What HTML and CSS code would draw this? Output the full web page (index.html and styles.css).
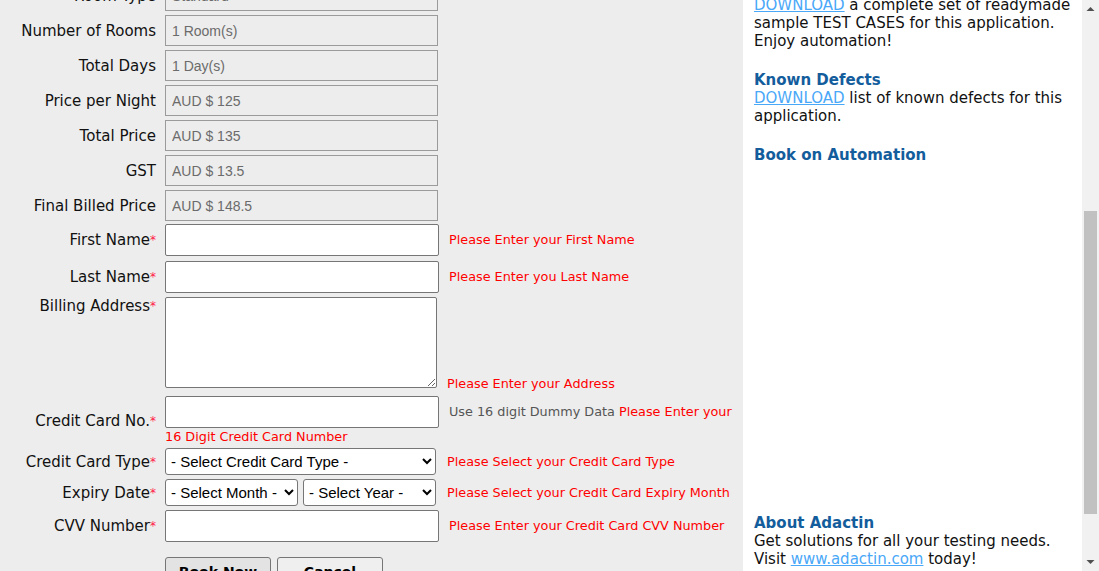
FILE: index.html
```html
<!DOCTYPE html>
<html lang="en">
<head>
<meta charset="utf-8">
<title>Book A Hotel</title>
<link rel="stylesheet" href="styles.css">
</head>
<body>
<div class="page">
  <main class="main">
    <form class="form">
      <div class="row">
        <div class="label">Room Type</div>
        <div class="field"><input class="ro" type="text" value="Standard" readonly></div>
      </div>
      <div class="row">
        <div class="label">Number of Rooms</div>
        <div class="field"><input class="ro" type="text" value="1 Room(s)" readonly></div>
      </div>
      <div class="row">
        <div class="label">Total Days</div>
        <div class="field"><input class="ro" type="text" value="1 Day(s)" readonly></div>
      </div>
      <div class="row">
        <div class="label">Price per Night</div>
        <div class="field"><input class="ro" type="text" value="AUD $ 125" readonly></div>
      </div>
      <div class="row">
        <div class="label">Total Price</div>
        <div class="field"><input class="ro" type="text" value="AUD $ 135" readonly></div>
      </div>
      <div class="row">
        <div class="label">GST</div>
        <div class="field"><input class="ro" type="text" value="AUD $ 13.5" readonly></div>
      </div>
      <div class="row row-last-ro">
        <div class="label">Final Billed Price</div>
        <div class="field"><input class="ro" type="text" value="AUD $ 148.5" readonly></div>
      </div>
      <div class="row row-first">
        <div class="label">First Name<span class="req">*</span></div>
        <div class="field"><input class="txt" type="text"><span class="err">Please Enter your First Name</span></div>
      </div>
      <div class="row">
        <div class="label">Last Name<span class="req">*</span></div>
        <div class="field"><input class="txt" type="text"><span class="err">Please Enter you Last Name</span></div>
      </div>
      <div class="row row-addr">
        <div class="label">Billing Address<span class="req">*</span></div>
        <div class="field field-addr"><textarea class="addr"></textarea><span class="err err-addr">Please Enter your Address</span></div>
      </div>
      <div class="row row-cc">
        <div class="label">Credit Card No.<span class="req">*</span></div>
        <div class="field flow"><input class="txt" type="text"><span class="hint">Use 16 digit Dummy Data</span> <span class="err-inline">Please Enter your<br>16 Digit Credit Card Number</span></div>
      </div>
      <div class="row">
        <div class="label">Credit Card Type<span class="req">*</span></div>
        <div class="field">
          <select class="sel sel-type"><option>- Select Credit Card Type -</option></select><span class="err err-sel">Please Select your Credit Card Type</span>
        </div>
      </div>
      <div class="row">
        <div class="label">Expiry Date<span class="req">*</span></div>
        <div class="field">
          <select class="sel sel-month"><option>- Select Month -</option></select><select class="sel sel-year"><option>- Select Year -</option></select><span class="err err-sel">Please Select your Credit Card Expiry Month</span>
        </div>
      </div>
      <div class="row row-cvv">
        <div class="label">CVV Number<span class="req">*</span></div>
        <div class="field"><input class="txt" type="text"><span class="err">Please Enter your Credit Card CVV Number</span></div>
      </div>
      <div class="row">
        <div class="label"></div>
        <div class="field buttons">
          <button type="button" class="btn btn-book">Book Now</button>
          <button type="button" class="btn btn-cancel">Cancel</button>
        </div>
      </div>
    </form>
  </main>
  <aside class="sidebar">
    <div class="block block-first">
      <p><a href="#">DOWNLOAD</a> a complete set of readymade<br>sample TEST CASES for this application.<br>Enjoy automation!</p>
    </div>
    <div class="block">
      <h3 class="side-title">Known Defects</h3>
      <p><a href="#">DOWNLOAD</a> list of known defects for this<br>application.</p>
    </div>
    <div class="block">
      <h3 class="side-title">Book on Automation</h3>
      <div class="book-space"></div>
    </div>
    <div class="block block-about">
      <h3 class="side-title">About Adactin</h3>
      <p>Get solutions for all your testing needs.<br>Visit <a href="#">www.adactin.com</a> today!</p>
    </div>
  </aside>
  <div class="scrollbar">
    <div class="sb-btn">
      <svg width="17" height="17" viewBox="0 0 17 17"><path d="M4.5 11 L8.5 7 L12.5 11 Z" fill="#505050"/></svg>
    </div>
    <div class="sb-track"><div class="sb-thumb"></div></div>
    <div class="sb-btn">
      <svg width="17" height="17" viewBox="0 0 17 17"><path d="M4.5 6 L12.5 6 L8.5 10 Z" fill="#505050"/></svg>
    </div>
  </div>
</div>
</body>
</html>
```

FILE: styles.css
```css
html, body {
  margin: 0;
  padding: 0;
  height: 100%;
  overflow: hidden;
}

body {
  font-family: "DejaVu Sans", Verdana, sans-serif;
  color: #000;
  background: #fff;
}

.page {
  display: flex;
  height: 571px;
}

.main {
  width: 743px;
  flex: none;
  background: #ededed;
  overflow: hidden;
}

.form {
  display: flex;
  flex-direction: column;
  margin: -20px 0 0 0;
}

.row {
  display: flex;
  align-items: center;
  margin-bottom: 4px;
}

.row-last-ro {
  margin-bottom: 3px;
}

.row-first {
  margin-bottom: 5px;
}

.row-addr {
  align-items: flex-start;
  margin-bottom: 8px;
}

.row-cc {
  margin-bottom: 2px;
}

.row-cvv {
  margin-bottom: 15px;
}

.label {
  width: 156px;
  flex: none;
  text-align: right;
  font-size: 15px;
  line-height: 18px;
  color: #111;
}

.req {
  color: #ff1a48;
  font-size: 12px;
  vertical-align: 1px;
}

.field {
  margin-left: 9px;
  display: flex;
  align-items: center;
}

.field-addr {
  align-items: flex-end;
}

.ro {
  width: 273px;
  height: 31px;
  box-sizing: border-box;
  margin: 0;
  padding: 0 6px;
  border: 1px solid #9b9b9b;
  border-radius: 0;
  background: #ededed;
  color: #6b6b6b;
  font: 14px "Liberation Sans", Arial, sans-serif;
  outline: none;
}

.txt {
  width: 274px;
  height: 32px;
  box-sizing: border-box;
  margin: 0;
  padding: 0 6px;
  border: 1px solid #767676;
  border-radius: 2px;
  background: #fff;
  font: 14px "Liberation Sans", Arial, sans-serif;
}

.addr {
  width: 272px;
  height: 91px;
  box-sizing: border-box;
  margin: 0;
  border: 1px solid #767676;
  border-radius: 2px;
  background: #fff;
  font: 14px "Liberation Sans", Arial, sans-serif;
}

.err {
  color: #ff0000;
  font-size: 12.8px;
  line-height: 16px;
  margin-left: 10px;
  white-space: nowrap;
}

.err-addr {
  margin-bottom: -4px;
}

.err-sel {
  margin-left: 11px;
}

.flow {
  display: block;
  font-size: 12.8px;
  line-height: 18px;
}

.flow .txt {
  vertical-align: middle;
}

.hint {
  color: #555;
  margin-left: 10px;
}

.err-inline {
  color: #ff0000;
}

.sel {
  height: 27px;
  box-sizing: border-box;
  margin: 0;
  padding: 0 0 0 1px;
  border: 1px solid #767676;
  border-radius: 3px;
  background: #fff;
  color: #000;
  font: 15px "Liberation Sans", Arial, sans-serif;
}

.sel-type {
  width: 271px;
}

.sel-month {
  width: 133px;
}

.sel-year {
  width: 133px;
  margin-left: 5px;
}

.buttons {
  gap: 6px;
}

.btn {
  width: 106px;
  height: 30px;
  box-sizing: border-box;
  margin: 0;
  border: 1px solid #767676;
  border-radius: 3px;
  font: bold 14px "DejaVu Sans", Verdana, sans-serif;
  color: #000;
  padding: 0;
}

.btn-book {
  background: #e3e3e3;
}

.btn-cancel {
  background: #efefef;
}

.sidebar {
  width: 339px;
  flex: none;
  box-sizing: border-box;
  padding: 0 0 0 11px;
  background: #fff;
  font-size: 15px;
  line-height: 18px;
  color: #111;
  overflow: hidden;
  white-space: nowrap;
}

.sidebar p {
  margin: 0;
}

.sidebar a {
  color: #4aa8f8;
  text-decoration: underline;
}

.block {
  margin-top: 21px;
}

.block.block-first {
  margin-top: -4px;
}

.side-title {
  margin: 0;
  font-size: 15px;
  line-height: 18px;
  font-weight: bold;
  color: #135d9c;
}

.book-space {
  height: 350px;
}

.block.block-about {
  margin-top: 0;
}

.scrollbar {
  width: 17px;
  flex: none;
  background: #f1f1f1;
  display: flex;
  flex-direction: column;
}

.sb-btn {
  height: 17px;
  flex: none;
}

.sb-btn svg {
  display: block;
}

.sb-track {
  flex: 1;
}

.sb-thumb {
  margin: 194px 2px 0 2px;
  height: 303px;
  background: #c1c1c1;
}
```
